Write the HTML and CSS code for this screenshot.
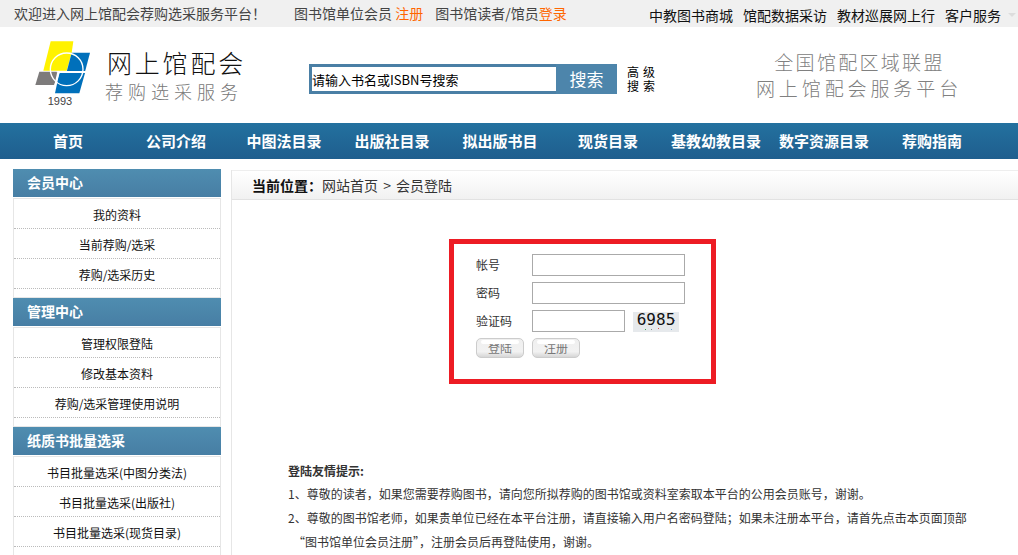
FILE: index.html
```html
<!DOCTYPE html>
<html lang="zh-CN">
<head>
    <meta charset="UTF-8">
    <title>网上馆配会</title>
    <link rel="stylesheet" href="styles.css">
</head>
<body>
    <div class="topbar">
        <div class="top-left">
            <span class="welcome">欢迎进入网上馆配会荐购选采服务平台！</span>
            <span class="top-unit">图书馆单位会员 <a class="orange">注册</a></span>
            <span class="top-reader">图书馆读者/馆员<a class="orange">登录</a></span>
        </div>
        <div class="top-right">
            <a>中教图书商城</a>
            <a>馆配数据采访</a>
            <a>教材巡展网上行</a>
            <a>客户服务</a>
            <i class="arrow"></i>
        </div>
    </div>

    <div class="header">
        <div class="logo">
            <svg class="logo-mark" viewBox="0 0 330 255" width="110" height="85">
                <polygon points="92,34 160,34 155,68 140,122 70,122" fill="#fff200"/>
                <polygon points="155,68 210,68 195,125 140,125" fill="#0070bb"/>
                <polygon points="58,125 112,125 103,165 46,165" fill="#7d7b7b"/>
                <polygon points="118,129 195,129 178,190 105,190" fill="#0070bb"/>
                <circle cx="140" cy="118" r="49" fill="none" stroke="#fff" stroke-width="4"/>
                <path d="M110 125H200" stroke="#fff" stroke-width="4"/>
                <path d="M118 125L103 170" stroke="#fff" stroke-width="4"/>
                <text x="120" y="224" text-anchor="middle" class="logo-year">1993</text>
            </svg>
            <div class="logo-text">
                <div class="logo-title">网上馆配会</div>
                <div class="logo-sub">荐购选采服务</div>
            </div>
        </div>
        <div class="search">
            <input class="search-input" type="text" value="请输入书名或ISBN号搜索">
            <div class="search-btn">搜索</div>
            <div class="search-adv">
                <div>高级</div>
                <div>搜索</div>
            </div>
        </div>
        <div class="slogan">
            <div class="slogan-a">全国馆配区域联盟</div>
            <div class="slogan-b">网上馆配会服务平台</div>
        </div>
    </div>

    <div class="nav">
        <a>首页</a>
        <a>公司介绍</a>
        <a>中图法目录</a>
        <a>出版社目录</a>
        <a>拟出版书目</a>
        <a>现货目录</a>
        <a>基教幼教目录</a>
        <a>数字资源目录</a>
        <a>荐购指南</a>
    </div>

    <div class="main">
        <div class="side">
            <div class="side-head">会员中心</div>
            <ul class="side-list">
                <li>我的资料</li>
                <li>当前荐购/选采</li>
                <li>荐购/选采历史</li>
            </ul>
            <div class="side-head">管理中心</div>
            <ul class="side-list">
                <li>管理权限登陆</li>
                <li>修改基本资料</li>
                <li>荐购/选采管理使用说明</li>
            </ul>
            <div class="side-head">纸质书批量选采</div>
            <ul class="side-list">
                <li>书目批量选采(中图分类法)</li>
                <li>书目批量选采(出版社)</li>
                <li>书目批量选采(现货目录)</li>
            </ul>
        </div>

        <div class="content">
            <div class="crumb"><b>当前位置：</b>网站首页 &gt; 会员登陆</div>

            <div class="login">
                <div class="row">
                    <label>帐号</label>
                    <input class="field" type="text">
                </div>
                <div class="row">
                    <label>密码</label>
                    <input class="field" type="password">
                </div>
                <div class="row">
                    <label>验证码</label>
                    <input class="field field-short" type="text">
                    <div class="captcha">6985</div>
                </div>
                <div class="btn-row">
                    <div class="btn">登陆</div>
                    <div class="btn">注册</div>
                </div>
            </div>

            <div class="tips">
                <p class="tips-title">登陆友情提示:</p>
                <p>1、尊敬的读者，如果您需要荐购图书，请向您所拟荐购的图书馆或资料室索取本平台的公用会员账号，谢谢。</p>
                <p>2、尊敬的图书馆老师，如果贵单位已经在本平台注册，请直接输入用户名密码登陆；如果未注册本平台，请首先点击本页面顶部</p>
                <p class="tips-indent">“图书馆单位会员注册”，注册会员后再登陆使用，谢谢。</p>
            </div>
        </div>
    </div>
</body>
</html>
```

FILE: styles.css
```css
/* reset */
*{
    margin: 0;
    padding: 0;
    box-sizing: border-box;
}
html,body{
    height: 555px;
    overflow: hidden;
}
body{
    font-family: "Noto Sans CJK SC", "Liberation Sans", sans-serif;
    font-size: 12px;
    color: #222;
    background-color: #fff;
}
ul{
    list-style: none;
}

/* top bar */
.topbar{
    height: 27px;
    background-color: #f0f0f0;
    display: flex;
    justify-content: space-between;
    align-items: center;
    padding: 0 2px 0 14px;
    font-size: 14px;
    line-height: 26px;
    color: #444;
}
.top-left{
    display: flex;
    margin-top: -1px;
}
.welcome{
    width: 252px;
    white-space: nowrap;
}
.top-unit{
    margin-left: 28px;
}
.top-reader{
    margin-left: 12px;
}
.orange{
    color: #f60;
}
.top-right{
    display: flex;
    align-items: center;
    gap: 10px;
    margin-top: 2px;
    color: #111;
}
.arrow{
    width: 0;
    height: 0;
    margin-left: -3px;
    border-left: 4px solid transparent;
    border-right: 4px solid transparent;
    border-top: 4px solid #ddd;
}

/* header */
.header{
    height: 96px;
    display: flex;
    align-items: flex-start;
}
.logo{
    width: 309px;
    display: flex;
}
.logo-mark{
    margin: 3px 0 0 20px;
    flex: none;
}
.logo-year{
    font-family: "Liberation Sans", sans-serif;
    font-size: 33px;
    fill: #444;
}
.logo-text{
    margin: 19px 0 0 -23px;
}
.logo-title{
    font-size: 25px;
    line-height: 32px;
    letter-spacing: 2.8px;
    color: #111;
    font-weight: 300;
}
.logo-sub{
    font-size: 18px;
    line-height: 26px;
    letter-spacing: 5px;
    margin-left: -2px;
    color: #777;
    font-weight: 300;
}
.search{
    margin-top: 37px;
    display: flex;
}
.search-input{
    width: 247px;
    height: 30px;
    border: 3px solid #4a7fa5;
    border-right: none;
    padding: 0;
    font-family: "Noto Sans CJK SC", "Liberation Sans", sans-serif;
    font-size: 13px;
    color: #000;
    outline: none;
}
.search-btn{
    width: 61px;
    height: 30px;
    background-color: #4d85ab;
    color: #fff;
    font-size: 17px;
    line-height: 30px;
    text-align: center;
}
.search-adv{
    margin: 2px 0 0 10px;
    font-family: "Liberation Sans", "Noto Sans CJK SC", sans-serif;
    font-size: 12px;
    line-height: 14px;
    letter-spacing: 4px;
    color: #000;
}
.search-adv div{
    height: 14px;
    white-space: nowrap;
}
.slogan{
    margin: 22px 0 0 95px;
    width: 210px;
    text-align: center;
    color: #808080;
    font-size: 19px;
    font-weight: 300;
    line-height: 26px;
    white-space: nowrap;
}
.slogan-a{
    letter-spacing: 2.3px;
    padding-left: 1px;
}
.slogan-b{
    letter-spacing: 3.9px;
}

/* nav */
.nav{
    height: 36px;
    padding-left: 14px;
    display: flex;
    background: linear-gradient(#23719f, #1f5e8e);
}
.nav a{
    width: 108px;
    text-align: center;
    color: #fff;
    font-size: 15px;
    font-weight: bold;
    line-height: 35px;
    white-space: nowrap;
}

/* main */
.main{
    display: flex;
    padding: 10px 0 0 13px;
    gap: 10px;
}
.side{
    width: 208px;
    flex: none;
}
.side-head{
    height: 28px;
    padding-left: 14px;
    background: linear-gradient(#4f8db0, #477ea4);
    color: #fff;
    font-size: 14px;
    font-weight: bold;
    line-height: 27px;
}
.side-list{
    height: 100px;
    margin-top: 1px;
    border: 1px solid #e6e6e6;
}
.side-list li{
    height: 30px;
    line-height: 32px;
    text-align: center;
    color: #111;
    border-bottom: 1px dotted #bbb;
    white-space: nowrap;
}
.content{
    flex: 1;
    height: 400px;
    margin-top: 1px;
    border-left: 1px solid #e6e6e6;
}
.crumb{
    height: 30px;
    padding-left: 20px;
    border-top: 1px solid #eee;
    border-bottom: 1px solid #e2e2e2;
    background: linear-gradient(#fff, #f1f1f1);
    font-size: 14px;
    line-height: 28px;
    word-spacing: 2px;
    color: #333;
}
.crumb b{
    color: #111;
}

/* login box */
.login{
    width: 267px;
    height: 145px;
    margin: 39px 0 0 217px;
    border: 5px solid #ed1c24;
    padding: 10px 0 0 22px;
}
.row{
    display: flex;
    align-items: center;
    height: 22px;
    margin-bottom: 6px;
}
.row label{
    width: 56px;
    padding-bottom: 2px;
    color: #333;
}
.field{
    width: 153px;
    height: 22px;
    border: 1px solid #aaa;
    outline: none;
}
.field-short{
    width: 93px;
}
.captcha{
    width: 46px;
    height: 20px;
    margin: 2px 0 0 8px;
    background-color: #e6e9ec;
    background-image:
        linear-gradient(#3aa655, #3aa655),
        linear-gradient(#d9534f, #d9534f),
        linear-gradient(#4a6fd0, #4a6fd0),
        linear-gradient(#888, #888),
        linear-gradient(#7ad, #7ad);
    background-size: 1px 1px;
    background-repeat: no-repeat;
    background-position: 12px 17px, 25px 16px, 41px 8px, 18px 17px, 38px 17px;
    color: #111;
    font-family: "DejaVu Sans Mono", monospace;
    font-size: 16px;
    line-height: 16px;
    text-align: center;
}
.btn-row{
    display: flex;
    gap: 8px;
    margin-top: 1px;
}
.btn{
    position: relative;
    width: 48px;
    height: 20px;
    border: 1px solid #ccc;
    border-radius: 5px;
    background: linear-gradient(#efefef, #f2f2f2 70%, #d6d6d6);
    color: #777;
    line-height: 18px;
    text-align: center;
}
/* shine on the button top */
.btn::before{
    content: "";
    position: absolute;
    top: 1px;
    left: 4px;
    right: 4px;
    height: 4px;
    border-radius: 3px;
    background-color: #fff;
}

/* tips */
.tips{
    margin: 75px 0 0 56px;
    color: #333;
    line-height: 24px;
    white-space: nowrap;
}
.tips-title{
    font-weight: bold;
    line-height: 23px;
}
.tips-indent{
    padding-left: 5px;
}
```
